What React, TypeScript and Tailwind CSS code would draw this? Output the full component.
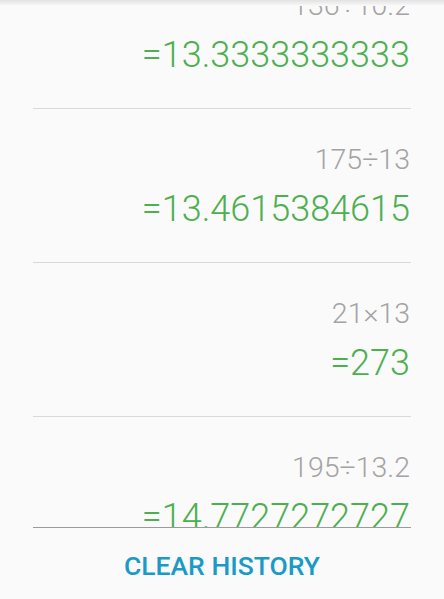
import React from "react";

const items = [
  { expr: "136÷10.2", res: "=13.3333333333" },
  { expr: "175÷13", res: "=13.4615384615" },
  { expr: "21×13", res: "=273" },
  { expr: "195÷13.2", res: "=14.7727272727" },
];

export default function App() {
  return (
    <div
      className="relative w-[444px] h-[599px] bg-[#fafafa] overflow-hidden"
      style={{ fontFamily: "Roboto, 'Liberation Sans', sans-serif" }}
    >
      <div className="absolute top-0 left-0 right-0 h-[6px] bg-gradient-to-b from-[#e2e2e2] to-[#fafafa] z-10" />
      <div className="mx-[33px] h-[528px] overflow-hidden border-b border-[#9a9a9a]">
        <div className="mt-[-45px] flex flex-col">
          {items.map((it, i) => (
            <div
              key={i}
              className="flex flex-col items-end pt-[33px] pb-[31px] border-b border-[#d9d9d9] pr-[1px]"
            >
              <div className="text-[28.5px] leading-[36px] font-light text-[#a3a3a3]">{it.expr}</div>
              <div className="mt-[9px] text-[36px] leading-[44px] font-light text-[#4caf50]">{it.res}</div>
            </div>
          ))}
        </div>
      </div>
      <div className="flex justify-center pt-[22px]">
        <div className="text-[26.5px] leading-[32px] font-medium text-[#1b9ac6]">CLEAR HISTORY</div>
      </div>
    </div>
  );
}
